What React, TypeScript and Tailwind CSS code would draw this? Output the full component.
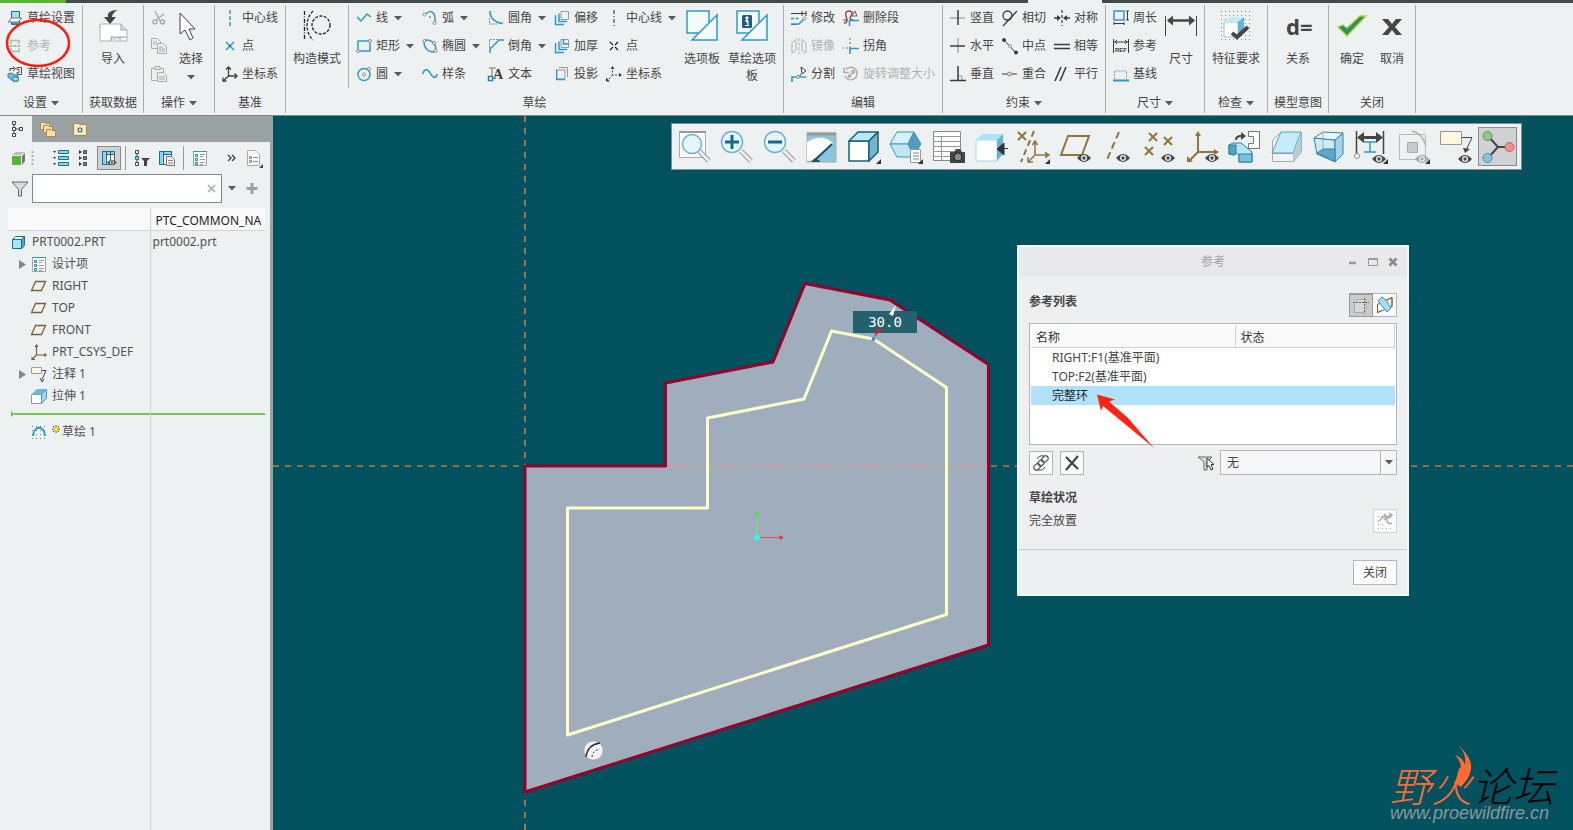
import { useState } from "react";
import type { ReactNode } from "react";

type IconProps = { children: ReactNode; size?: number };

const Icon = ({ children, size = 16 }: IconProps) => (
  <svg
    width={size}
    height={size}
    viewBox={`0 0 ${size} ${size}`}
    fill="none"
    className="shrink-0 overflow-visible"
    aria-hidden="true"
  >
    {children}
  </svg>
);

const Caret = () => (
  <svg width="8" height="5" viewBox="0 0 8 5" className="shrink-0" aria-hidden="true">
    <path d="M0 0h8L4 4.5z" fill="#5a5a5a" />
  </svg>
);

const Eye = ({ x = 16, y = 22, color = "#4b4b4b" }) => (
  <g transform={`translate(${x} ${y})`}>
    <path d="M0 5Q7-3 14 5Q7 13 0 5Z" fill={color} />
    <circle cx="7" cy="5" r="3" fill="#edf1f2" />
    <circle cx="7" cy="5" r="1.7" fill={color} />
  </g>
);

const Corner = () => <path d="M33 28v5h-5z" fill="#333" />;

const BLUE = "#2a9bcb";
const DARK = "#3c3c3c";
const GOLD = "#94743a";

/* ---------- ribbon icons, 16px ---------- */

const small: Record<string, ReactNode> = {
  setup: (
    <>
      <path d="M4.500 1.500h8v13h-8z" fill="#a6dcf2" stroke="#1b6d92" />
      <path d="M5 8h10l-4 4H1z" fill="#fff" stroke="#777" />
      <path d="M5 12.500h7v2H5z" fill={BLUE} />
    </>
  ),
  refs: (
    <g stroke="#b5b5b5">
      <path d="M4 6V2.500h8V6M4 10v3.500h8V10" strokeWidth="1.500" />
      <path d="M2.500 8h11" strokeWidth="2" strokeDasharray="3 1" />
    </g>
  ),
  view: (
    <>
      <path d="M3 5V2.500h4M6 .5l2.500 2L6 5" stroke={DARK} />
      <path d="M10 1.500h4.500v7H10v-2h2v-3h-2z" stroke="#555" />
      <path d="M1 8l3-1 4 2 3 1v5H6l-5-4z" fill="#6bbddd" stroke="#2380aa" />
      <path d="M6 11h5v4H6z" fill="#a6dcf2" stroke="#2380aa" />
    </>
  ),
  cut: (
    <g stroke="#aaa" strokeWidth="1.500">
      <path d="M4 1l5 10M13 4L5 10" />
      <circle cx="4" cy="12" r="2" />
      <circle cx="11.500" cy="12" r="2" />
    </g>
  ),
  copy: (
    <g stroke="#aaa" fill="#eceeef">
      <path d="M.5 .5h6l3 3v7h-9z" />
      <path d="M6.500 5.500h6l3 3v7h-9z" />
      <path d="M2 4h4M2 6h3M8 9h4M8 11h6M8 13h6" />
    </g>
  ),
  paste: (
    <g stroke="#aaa" fill="#eceeef">
      <path d="M.5 2.500h12v12H.5z" />
      <path d="M4 .5h5v3H4z" />
      <path d="M6.500 6.500h6l3 3v6h-9z" />
      <path d="M8 11h6M8 13h6" />
    </g>
  ),
  axisBlue: <path d="M8 0v16" stroke={BLUE} strokeWidth="1.500" strokeDasharray="4 2" />,
  pointBlue: (
    <>
      <path d="M4 4l8 8M12 4l-8 8" stroke={BLUE} strokeWidth="1.500" />
      <path d="M7 7h2v2H7z" fill="#1b6d92" />
    </>
  ),
  csys: (
    <g stroke={DARK} strokeWidth="1.300">
      <path d="M6.500 1v9H15M6.500 10L1 15" />
      <path d="M4 3.500L6.500 1 9 3.500M12.500 7.500L15 10l-2.500 2.500M1 11.500V15h3.500" />
    </g>
  ),
  line: <path d="M1 7l4 4 6-7 4 3" stroke={BLUE} strokeWidth="1.500" />,
  rect: (
    <>
      <path d="M2 3h12v10H2z" stroke={BLUE} strokeWidth="1.500" />
      <circle cx="14" cy="3" r="1.500" fill="#fff" stroke="#888" />
      <circle cx="2" cy="13" r="1.500" fill="#fff" stroke="#888" />
    </>
  ),
  circle: (
    <>
      <circle cx="8" cy="8.500" r="6" stroke={BLUE} strokeWidth="1.500" />
      <circle cx="8" cy="8.500" r="1.500" fill="#fff" stroke="#888" />
      <circle cx="13" cy="3" r="1.500" fill="#fff" stroke="#888" />
    </>
  ),
  arc: (
    <>
      <path d="M3 4.500Q9-1 12 4q2 4 .5 9" stroke={BLUE} strokeWidth="1.500" />
      <circle cx="2.500" cy="4.500" r="1.500" fill="#fff" stroke="#888" />
      <circle cx="8" cy="7" r="1" fill="#888" />
      <circle cx="12.500" cy="13" r="1.500" fill="#fff" stroke="#888" />
    </>
  ),
  ellipse: (
    <>
      <ellipse cx="8" cy="8" rx="7" ry="4.500" transform="rotate(45 8 8)" stroke={BLUE} strokeWidth="1.500" />
      <circle cx="2.500" cy="3" r="1.500" fill="#fff" stroke="#888" />
      <circle cx="12" cy="5" r="1.500" fill="#fff" stroke="#888" />
      <circle cx="13.500" cy="13" r="1.500" fill="#fff" stroke="#888" />
    </>
  ),
  spline: <path d="M1 8C2 2 6 3 8 7s6 7 7 1" stroke={BLUE} strokeWidth="1.600" />,
  fillet: (
    <>
      <path d="M2 1c0 7 5 12 13 12.500" stroke={BLUE} strokeWidth="1.600" />
      <path d="M1.500 8v6H10" stroke="#888" strokeDasharray="2 1" />
    </>
  ),
  chamfer: (
    <>
      <path d="M2 15v-4l9-9h5" stroke={BLUE} strokeWidth="1.500" />
      <path d="M1.500 10V1.500H10" stroke="#888" strokeDasharray="2 1" />
    </>
  ),
  text: (
    <>
      <path d="M1 2h7M4 2v12" stroke="#777" />
      <text x="5" y="13" fontSize="14" fontWeight="bold" fontFamily="Liberation Serif, serif" fill={DARK}>
        A
      </text>
      <path d="M.5 10.500h4v4h-4z" fill="#fff" stroke="#1b86b8" strokeWidth="1.500" />
    </>
  ),
  offset: (
    <>
      <path d="M7 1.500h7.500v8H7z" stroke="#999" />
      <path d="M5 3.500v8h8M1.500 5v9.500H10" stroke={BLUE} strokeWidth="1.500" />
    </>
  ),
  thicken: (
    <>
      <path d="M7 1.500h7.500v8H7z" stroke="#999" />
      <path d="M5 3.500v8h8M1.500 5v9.500H10M9.500 1v5H15" stroke={BLUE} strokeWidth="1.500" />
    </>
  ),
  project: (
    <>
      <path d="M3 4h8v9H3zM5 1.500h8.500V11" stroke="#999" />
      <path d="M2 13.500h9" stroke={BLUE} strokeWidth="1.500" />
      <path d="M2.500 3v10.500" stroke={BLUE} />
    </>
  ),
  axis: <path d="M8 0v16" stroke="#222" strokeDasharray="4 2 1 2" />,
  point: <path d="M4 4l3 3M9 9l3 3M12 4L9 7M7 9l-3 3" stroke="#222" strokeWidth="1.200" />,
  csysDash: (
    <>
      <path d="M6.500 1v8H14M6.500 9L1 15" stroke={DARK} strokeDasharray="2 1.500" />
      <path d="M4.500 3l2-3 2 3zM13 7l3 2-3 2zM0 11.500v4h4z" fill={DARK} />
    </>
  ),
  modify: (
    <>
      <path d="M0 3.500h15M11 1v5M15 1v5M0 14.500h6" stroke={DARK} />
      <path d="M0 8.500h9" stroke={BLUE} strokeWidth="1.500" strokeDasharray="3 1.500" />
      <path d="M0 14h8l5-5" stroke={BLUE} strokeWidth="1.600" />
      <circle cx="13.500" cy="8.500" r="1.500" fill="#fff" stroke="#888" />
    </>
  ),
  mirror: (
    <g stroke="#b2b2b2">
      <path d="M1 5l4-4v11l-4 3zM15 5l-4-4v11l4 3z" />
      <path d="M8 0v16" strokeDasharray="3 1.500" />
    </g>
  ),
  divide: (
    <>
      <path d="M1 16v-5h14" stroke={BLUE} strokeWidth="1.600" />
      <path d="M10 1l1 7 4-3zM10 8l-2 3" stroke={DARK} />
      <circle cx="7" cy="11" r="1.500" fill="#fff" stroke="#888" />
    </>
  ),
  remove: (
    <>
      <path d="M1 13c4 0 3-4 2-7s0-5 3-5 4 2 2 5 0 4 2 4" stroke="#a23a38" strokeWidth="1.400" />
      <path d="M12 1l-3 5h5zM0 10h5" stroke="#666" />
      <path d="M6.500 16v-5.500H16" stroke={BLUE} strokeWidth="1.600" />
    </>
  ),
  corner: (
    <>
      <path d="M7 0v10H0" stroke="#999" strokeWidth="1.500" strokeDasharray="2 2" />
      <path d="M7 16v-5.500h9" stroke={BLUE} strokeWidth="1.600" />
    </>
  ),
  rotate: (
    <g stroke="#aaa" strokeWidth="1.400">
      <path d="M3 3.500A6.300 6.300 0 1 1 2 10M1 1.500v5h5M5.500 11L11 5M8 5h3v3M5.500 8.500V11H8" />
    </g>
  ),
  vertical: (
    <>
      <path d="M0 8h15" stroke="#aaa" strokeWidth="1.500" />
      <path d="M8 0v15" stroke={DARK} strokeWidth="1.500" />
    </>
  ),
  horizontal: (
    <>
      <path d="M8 0v15" stroke="#aaa" strokeWidth="1.500" />
      <path d="M0 8h15" stroke={DARK} strokeWidth="1.500" />
    </>
  ),
  perp: (
    <>
      <path d="M8 10h4v4" stroke="#999" />
      <path d="M8 0v14M0 14.500h16" stroke={DARK} strokeWidth="1.500" />
    </>
  ),
  tangent: (
    <g stroke={DARK} strokeWidth="1.300">
      <circle cx="5.500" cy="5.500" r="4.500" />
      <path d="M1 16L15 1" />
    </g>
  ),
  middle: (
    <>
      <path d="M2 2l11 12" stroke={DARK} />
      <circle cx="2" cy="2" r="2" fill={DARK} />
      <circle cx="14" cy="14.500" r="2" fill={DARK} />
      <circle cx="8" cy="8" r="1.500" fill="#fff" stroke="#999" />
    </>
  ),
  coincident: (
    <>
      <path d="M0 8h15" stroke={DARK} />
      <circle cx="7.500" cy="8" r="2" fill="#ddd" stroke="#888" />
    </>
  ),
  symmetric: (
    <>
      <path d="M8 0v16" stroke={DARK} strokeDasharray="3 2" strokeWidth="1.200" />
      <path d="M0 8h4M16 8h-4" stroke={DARK} strokeWidth="1.300" />
      <path d="M3 5l4 3-4 3zM13 5L9 8l4 3z" fill={DARK} />
    </>
  ),
  equal: <path d="M0 6.500h16M0 10.500h16" stroke={DARK} strokeWidth="1.500" />,
  parallel: <path d="M1 15L7 1M6 15l6-14" stroke={DARK} strokeWidth="1.600" />,
  perimeter: (
    <>
      <path d="M1 1h10v9H1z" stroke={BLUE} strokeWidth="1.500" />
      <path d="M14.500 1v9M13 1h3M13 10h3M1 13.500h10M1 12v3M11 12v3" stroke={DARK} />
    </>
  ),
  refDim: (
    <>
      <path d="M.5 1v14M15.500 1v14M1 4h14M4 2L2 4l2 2M12 2l2 2-2 2" stroke={DARK} />
      <text x="2" y="14" fontSize="6" fontWeight="bold" fontFamily="Liberation Sans, sans-serif" fill={DARK}>
        REF
      </text>
    </>
  ),
  baseline: (
    <>
      <path d="M1.500 13V5h12v8" stroke="#999" strokeDasharray="2 1" />
      <path d="M0 14.500h16" stroke={BLUE} strokeWidth="2" />
    </>
  ),
};

/* ---------- ribbon icons, 32px ---------- */

const large: Record<string, ReactNode> = {
  import: (
    <>
      <path d="M3 14h21l6 6v11H3z" fill="#fff" stroke="#aab2b6" />
      <path d="M24 14v6h6M14 31v-4h16M23 27v4" fill="#cfe4ee" stroke="#8aa5b2" />
      <path d="M21 0c-8 0-11 3-10 7H7l6 7 6-7h-4c0-3 2-5 6-7z" fill="#454545" />
    </>
  ),
  select: <path d="M5 3v21l5-4 5 10 3-2-4-9h6z" fill="#fff" stroke="#444" />,
  construct: (
    <g stroke="#222" strokeWidth="1.300">
      <path d="M3.500 1v29" strokeDasharray="4 1.500 1 1.500" />
      <path d="M12 1C4 9 4 22 12 30" strokeDasharray="3 1.500" />
      <circle cx="20" cy="15" r="9" strokeDasharray="3 1.500" />
    </g>
  ),
  palette: (
    <g stroke={BLUE} strokeWidth="1.500">
      <path d="M1 1h22v22H1z" fill="#f5f9fa" />
      <path d="M31 5v25H6z" fill="#f5f9fa" />
    </g>
  ),
  paletteInfo: (
    <>
      <g stroke={BLUE} strokeWidth="1.500">
        <path d="M1 1h22v22H1z" fill="#f5f9fa" />
        <path d="M31 5v25H6z" fill="#f5f9fa" />
      </g>
      <rect x="6" y="5" width="10" height="13" rx="1.500" fill="#17607f" />
      <path d="M10 7h2v2h-2zM9 10.500h3v5h1M9 15.500h4" fill="#fff" stroke="#fff" />
    </>
  ),
  dimension: (
    <g stroke="#454545">
      <path d="M.5 6v20M31.500 6v20" />
      <path d="M3 10.500h26" strokeWidth="2.500" />
      <path d="M2 10.500l6-5v10zM30 10.500l-6-5v10z" fill="#454545" stroke="none" />
    </g>
  ),
  check: (
    <>
      <g stroke="#888" strokeDasharray="1 3">
        <path d="M1 1.500h30M1 5.500h30M1 9.500h30M1 13.500h30M1 17.500h30M1 21.500h30M1 25.500h30M1 29.500h30" />
      </g>
      <path d="M4 12h14v15H4z" fill="#fff" stroke="#9cc8da" />
      <path d="M4 12l6-5h14l-6 5z" fill="#c4ecf8" />
      <path d="M18 12l6-5v15l-6 5z" fill="#6ab3d0" />
      <path d="M12 23l5 4L28 17" stroke="#454545" strokeWidth="4" />
    </>
  ),
  relation: (
    <text x="4" y="25" fontSize="22" fontWeight="bold" fontFamily="Noto Sans, sans-serif" fill="#454545">
      d=
    </text>
  ),
  ok: <path d="M2 17l9 9L30 6h-6L11 18l-4-3z" fill="#2f9160" stroke="#b5d334" strokeWidth="1.300" />,
  cancel: <path d="M6 9h6l4 5 4-5h6l-7 8 7 8h-6l-4-5-4 5H6l7-8z" fill="#454545" />,
};

type ToolProps = { icon: string; label: string; caret?: boolean; disabled?: boolean };

const Tool = ({ icon, label, caret, disabled }: ToolProps) => (
  <button
    type="button"
    disabled={disabled}
    className="flex h-7 items-center gap-1 whitespace-nowrap text-[#454545] disabled:text-[#b0b3b4]"
  >
    <Icon>{small[icon]}</Icon>
    <span>{label}</span>
    {caret && (
      <span className="pl-0.5">
        <Caret />
      </span>
    )}
  </button>
);

type BigToolProps = { icon: string; label: string; caret?: boolean; width?: string };

const BigTool = ({ icon, label, caret, width = "w-12" }: BigToolProps) => (
  <button type="button" className={`flex shrink-0 flex-col items-center pt-1.5 leading-[17px] ${width}`}>
    <Icon size={32}>{large[icon]}</Icon>
    <span className="pt-2">{label}</span>
    {caret && (
      <span className="pt-2">
        <Caret />
      </span>
    )}
  </button>
);

type GroupProps = { label: string; caret?: boolean; width: string; children: ReactNode };

const Group = ({ label, caret, width, children }: GroupProps) => (
  <section className={`flex h-28 shrink-0 ${width}`}>
    <div className="flex min-w-0 flex-1 flex-col pt-px">
      <div className="flex flex-1 items-start">{children}</div>
      <button type="button" className="flex h-6 items-center justify-center gap-1 whitespace-nowrap">
        {label}
        {caret && <Caret />}
      </button>
    </div>
    <div className="my-0.5 w-px bg-[#a9adaf]" />
  </section>
);

const Column = ({ tools, width = "" }: { tools: ToolProps[]; width?: string }) => (
  <div className={`flex shrink-0 flex-col items-start ${width}`}>
    {tools.map((tool) => (
      <Tool key={tool.icon} {...tool} />
    ))}
  </div>
);

const Ribbon = () => (
  <header className="shrink-0 border-b border-[#7f898c] bg-[#edf1f2]">
    <div className="flex h-[3px] bg-[#414b49]">
      <div className="w-[66px] bg-[#5cb531]" />
      <div className="w-[962px]" />
      <div className="w-[74px] bg-[#edf1f2]" />
    </div>
    <div className="flex">
      <Group label="设置" caret width="w-[83px]">
        <div className="pl-[7px]">
          <Column
            tools={[
              { icon: "setup", label: "草绘设置" },
              { icon: "refs", label: "参考", disabled: true },
              { icon: "view", label: "草绘视图" },
            ]}
          />
        </div>
      </Group>
      <Group label="获取数据" width="w-[61px]">
        <div className="flex flex-1 justify-center">
          <BigTool icon="import" label="导入" />
        </div>
      </Group>
      <Group label="操作" caret width="w-[71px]">
        <div className="flex pl-[7px]">
          <div className="w-4">
            {["cut", "copy", "paste"].map((name) => (
              <button key={name} type="button" aria-label={name} className="flex h-7 items-center">
                <Icon>{small[name]}</Icon>
              </button>
            ))}
          </div>
          <BigTool icon="select" label="选择" caret />
        </div>
      </Group>
      <Group label="基准" width="w-[71px]">
        <div className="pl-[7px]">
          <Column
            tools={[
              { icon: "axisBlue", label: "中心线" },
              { icon: "pointBlue", label: "点" },
              { icon: "csys", label: "坐标系" },
            ]}
          />
        </div>
      </Group>
      <Group label="草绘" width="w-[498px]">
        <div className="flex px-[7px]">
          <BigTool icon="construct" label="构造模式" />
        </div>
        <div className="mr-[7px] mt-px h-[83px] w-px bg-[#a9adaf]" />
        <Column
          width="w-[66px]"
          tools={[
            { icon: "line", label: "线", caret: true },
            { icon: "rect", label: "矩形", caret: true },
            { icon: "circle", label: "圆", caret: true },
          ]}
        />
        <Column
          width="w-[66px]"
          tools={[
            { icon: "arc", label: "弧", caret: true },
            { icon: "ellipse", label: "椭圆", caret: true },
            { icon: "spline", label: "样条" },
          ]}
        />
        <Column
          width="w-[66px]"
          tools={[
            { icon: "fillet", label: "圆角", caret: true },
            { icon: "chamfer", label: "倒角", caret: true },
            { icon: "text", label: "文本" },
          ]}
        />
        <Column
          width="w-[52px]"
          tools={[
            { icon: "offset", label: "偏移" },
            { icon: "thicken", label: "加厚" },
            { icon: "project", label: "投影" },
          ]}
        />
        <Column
          width="w-[72px]"
          tools={[
            { icon: "axis", label: "中心线", caret: true },
            { icon: "point", label: "点" },
            { icon: "csysDash", label: "坐标系" },
          ]}
        />
        <BigTool icon="palette" label="选项板" />
        <BigTool icon="paletteInfo" label="草绘选项板" width="w-[52px]" />
      </Group>
      <Group label="编辑" width="w-[159px]">
        <div className="flex pl-[7px]">
          <Column
            width="w-[52px]"
            tools={[
              { icon: "modify", label: "修改" },
              { icon: "mirror", label: "镜像", disabled: true },
              { icon: "divide", label: "分割" },
            ]}
          />
          <Column
            tools={[
              { icon: "remove", label: "删除段" },
              { icon: "corner", label: "拐角" },
              { icon: "rotate", label: "旋转调整大小", disabled: true },
            ]}
          />
        </div>
      </Group>
      <Group label="约束" caret width="w-[163px]">
        <div className="flex pl-[7px]">
          <Column
            width="w-[52px]"
            tools={[
              { icon: "vertical", label: "竖直" },
              { icon: "horizontal", label: "水平" },
              { icon: "perp", label: "垂直" },
            ]}
          />
          <Column
            width="w-[52px]"
            tools={[
              { icon: "tangent", label: "相切" },
              { icon: "middle", label: "中点" },
              { icon: "coincident", label: "重合" },
            ]}
          />
          <Column
            tools={[
              { icon: "symmetric", label: "对称" },
              { icon: "equal", label: "相等" },
              { icon: "parallel", label: "平行" },
            ]}
          />
        </div>
      </Group>
      <Group label="尺寸" caret width="w-[99px]">
        <div className="flex pl-[7px]">
          <Column
            tools={[
              { icon: "perimeter", label: "周长" },
              { icon: "refDim", label: "参考" },
              { icon: "baseline", label: "基线" },
            ]}
          />
          <BigTool icon="dimension" label="尺寸" />
        </div>
      </Group>
      <Group label="检查" caret width="w-[63px]">
        <div className="flex flex-1 justify-center">
          <BigTool icon="check" label="特征要求" />
        </div>
      </Group>
      <Group label="模型意图" width="w-[61px]">
        <div className="flex flex-1 justify-center">
          <BigTool icon="relation" label="关系" />
        </div>
      </Group>
      <Group label="关闭" width="w-[87px]">
        <div className="flex flex-1 justify-center">
          <BigTool icon="ok" label="确定" width="w-10" />
          <BigTool icon="cancel" label="取消" width="w-10" />
        </div>
      </Group>
    </div>
  </header>
);

/* ---------- model tree ---------- */

const DocList = () => (
  <>
    <path d="M1.500 1.500h13v14h-13z" fill="#fff" stroke="#a0a4a6" />
    <path d="M1 1.500h14" stroke={BLUE} />
    <path d="M3.500 4.500h2v2h-2zM3.500 8.500h2v2h-2zM3.500 12.500h2v2h-2z" stroke="#1b86b8" />
    <path d="M8 4.500h5M8 6.500h3M8 9.500h5M8 12.500h5M8 14.500h3" stroke="#999" />
  </>
);

const Plane = () => <path d="M4.500 3.500h10l-4 9H.5z" stroke="#7c6132" strokeWidth="1.300" />;

type TreeRow = {
  label: string;
  icon: ReactNode;
  root?: boolean;
  expandable?: boolean;
  fresh?: boolean;
  value?: string;
};

const rows: TreeRow[] = [
  {
    label: "PRT0002.PRT",
    root: true,
    value: "prt0002.prt",
    icon: (
      <g stroke="#1b6d92">
        <path d="M1.500 5.500h9v9h-9z" fill="#a5e2fb" />
        <path d="M1.500 5.500l3-3h9l-3 3z" fill="#dff5fd" />
        <path d="M10.500 5.500l3-3v9l-3 3z" fill="#4ba9cf" />
      </g>
    ),
  },
  { label: "设计项", expandable: true, icon: <DocList /> },
  { label: "RIGHT", icon: <Plane /> },
  { label: "TOP", icon: <Plane /> },
  { label: "FRONT", icon: <Plane /> },
  {
    label: "PRT_CSYS_DEF",
    icon: (
      <path
        d="M5.500 1v10H15M5.500 11L1 15.500M4 3l1.500-2L7 3M13.500 9.500L15 11l-1.500 1.500M1 13v2.500h3"
        stroke="#7c6132"
        strokeWidth="1.200"
      />
    ),
  },
  {
    label: "注释 1",
    expandable: true,
    icon: (
      <>
        <path d="M.5 1.500h10v6H.5z" fill="#fff6df" stroke="#a0a0a0" />
        <path d="M11 4.500h4l-4 9M9 12l2 4 2-3" stroke="#444" />
      </>
    ),
  },
  {
    label: "拉伸 1",
    icon: (
      <>
        <path d="M.5 6.500h10v9H.5z" fill="#fff" stroke="#999" />
        <path d="M.5 6.500L6 1h9.500L10.500 6.500z" fill="#6bb9d8" />
        <path d="M10.500 6.500L15.500 1v9.500l-5 5z" fill="#9dd5eb" stroke="#5a9ab5" />
      </>
    ),
  },
];

const sketchIcon = (
  <>
    <g stroke="#777" strokeDasharray="1 3">
      <path d="M1 2.500h14M1 6.500h14M1 10.500h14M1 14.500h14" />
    </g>
    <path d="M2 12c1-11 11-11 12 0" stroke={BLUE} strokeWidth="2" />
  </>
);

const TreeItem = ({ label, icon, root, expandable, fresh, value }: TreeRow) => (
  <tr className="h-[22px]">
    <td className="border-r border-[#cfd3d4] p-0">
      <div className="flex h-[22px] items-center gap-[5px] pl-[3px]">
        {!root && (
          <span className="flex w-[15px] justify-end">
            {expandable && (
              <svg width="7" height="9" viewBox="0 0 7 9" aria-hidden="true">
                <path d="M0 0l7 4.500L0 9z" fill="#868686" />
              </svg>
            )}
          </span>
        )}
        <Icon>{icon}</Icon>
        <span className="flex items-center gap-0.5 whitespace-nowrap">
          {fresh && (
            <svg width="8" height="16" viewBox="0 0 8 16" aria-hidden="true">
              <path d="M4 1v8M0 5h8M1 2l6 6M7 2L1 8" stroke="#444" />
              <circle cx="4" cy="5" r="2.200" fill="#ffec00" />
            </svg>
          )}
          {label}
        </span>
      </div>
    </td>
    <td className="p-0 pl-0.5">{value}</td>
  </tr>
);

const Sidebar = () => {
  const [filter, setFilter] = useState<string>("");

  return (
    <aside className="flex w-[273px] shrink-0 flex-col border-r-[3px] border-[#9aa1a3] bg-[#edf1f2] text-[#505050]">
      <div className="flex h-[26px] shrink-0 bg-[#9aa1a3]">
        <button type="button" aria-label="模型树" className="flex w-8 items-center justify-center bg-[#edf1f2]">
          <Icon>
            <path
              d="M4.500.5h3v3h-3zM4.500 6.500h3v3h-3zM4.500 12.500h3v3h-3zM11.500 6.500h3v3h-3zM6 4v2M6 10v2M8 8h3"
              stroke="#444"
            />
          </Icon>
        </button>
        <button type="button" aria-label="文件夹浏览器" className="flex w-8 items-center justify-center">
          <Icon>
            <g fill="#fbe0a4" stroke="#a88a52">
              <path d="M.5 1.500h4l1 1h4v6h-9z" />
              <path d="M3.500 4.500h4l1 1h4v6h-9z" />
              <path d="M6.500 8.500h4l1 1h4v6h-9z" />
            </g>
          </Icon>
        </button>
        <button type="button" aria-label="收藏夹" className="flex w-8 items-center justify-center">
          <Icon>
            <path d="M1.500 2.500h5l1 1h7v11h-13z" fill="#fbe8bb" stroke="#a88a52" />
            <path d="M8 6v6M5 9h6M6 7l4 4M10 7l-4 4" stroke="#1b5d80" />
            <circle cx="8" cy="9" r="1" fill="#fff" />
          </Icon>
        </button>
      </div>

      <div className="flex h-8 shrink-0 items-center gap-1 pl-[11px] pr-2">
        <div className="flex w-[38px] items-center gap-1">
          <Icon>
            <path d="M1 6h9v9H1z" fill="#56b530" />
            <path d="M1 5l4-3h9l-4 3z" fill="#b9bcbd" />
            <path d="M11 6l3-3v8l-3 4z" fill="#777" />
          </Icon>
          <svg width="3" height="16" viewBox="0 0 3 16" aria-hidden="true">
            <path d="M1.500 1v15" stroke="#aaa" strokeWidth="2" strokeDasharray="2 2" />
          </svg>
        </div>
        <div className="flex items-center gap-1.5">
          <Icon>
            <path d="M5.500 .5h10v3h-10zM5.500 6.500h10v3h-10zM5.500 12.500h10v3h-10z" fill="#8ad4f4" stroke="#1b6d92" />
            <path d="M0 1h3L1.500 3zM0 7h3L1.500 9zM0 13h3l-1.500 2z" fill="#333" />
          </Icon>
          <Icon>
            <path d="M8.500 .5h3v3h-3zM8.500 6.500h3v3h-3zM8.500 12.500h3v3h-3z" fill="#888" stroke="#444" />
            <path d="M4 0l3 2-3 2zM4 6l3 2-3 2zM4 12l3 2-3 2z" fill="#333" />
          </Icon>
          <button
            type="button"
            aria-label="树列"
            className="flex size-6 items-center justify-center border border-[#8a8d8f] bg-[#cfd1d3]"
          >
            <Icon>
              <path d="M1.500 1.500h12v13h-12z" fill="#fff" stroke="#555" />
              <path d="M1.500 1.500h4v13h-4zM5.500 1.500h8v3h-8z" fill="#8ad4f4" stroke="#1b6d92" />
              <path d="M9.500 2v9" stroke="#555" />
              <g transform="translate(6 9) scale(.7)">
                <Eye x={0} y={0} />
              </g>
            </Icon>
          </button>
        </div>
        <div className="h-6 w-px bg-[#9a9d9f]" />
        <div className="flex items-center gap-[9px] px-1">
          <Icon>
            <path d="M1.500.5h3v3h-3zM1.500 12.500h3v3h-3zM3 4v2M3 10v2" stroke="#444" />
            <path d="M1.500 6.500h3v3h-3z" fill="#8ad4f4" stroke="#1b6d92" />
            <path d="M7 8h9l-3 3v5h-3v-5z" fill="#444" />
          </Icon>
          <Icon>
            <path d="M.5 1.500h12v13H.5z" fill="#fff" stroke="#555" />
            <path d="M.5 1.500h4v13h-4zM4.500 1.500h8v3h-8z" fill="#8ad4f4" stroke="#1b6d92" />
            <path d="M7.500 6.500h5l3 3v6h-8z" fill="#f2f2f2" stroke="#777" />
            <path d="M9 10.500h5M9 13h5" stroke="#888" />
          </Icon>
        </div>
        <div className="h-6 w-px bg-[#9a9d9f]" />
        <div className="px-1">
          <Icon>
            <DocList />
          </Icon>
        </div>
        <div className="flex flex-1 items-center justify-end gap-1.5">
          <Icon>
            <path d="M4 5l3 3-3 3M8 5l3 3-3 3" stroke="#444" strokeWidth="1.400" />
          </Icon>
          <Icon>
            <path d="M1.500.5h8l4 4v11h-12z" fill="#fafafa" stroke="#aaa" />
            <path d="M3.500 6.500h2v2h-2zM3.500 10.500h2v2h-2zM7 7.500h5M7 11.500h5" stroke="#888" />
            <path d="M17 14v4h-4z" fill="#444" />
          </Icon>
        </div>
      </div>

      <div className="flex h-[29px] shrink-0 items-center gap-1 pl-3 pr-1">
        <Icon>
          <path d="M0 1h16L9.500 8.500V15h-3V8.500z" fill="#d9dcdd" stroke="#666" />
        </Icon>
        <div className="flex h-full w-[190px] shrink-0 items-center border border-[#7f898c] bg-white pr-0.5">
          <input
            type="text"
            aria-label="树过滤器"
            value={filter}
            onChange={(e) => setFilter(e.target.value)}
            className="h-full min-w-0 flex-1 px-1 focus:outline-hidden"
          />
          <button type="button" aria-label="清除" onClick={() => setFilter("")}>
            <Icon>
              <path d="M5 4l7 7M12 4l-7 7" stroke="#aaa" strokeWidth="1.500" />
            </Icon>
          </button>
        </div>
        <button type="button" aria-label="过滤选项" className="px-0.5">
          <Caret />
        </button>
        <button type="button" aria-label="添加" className="px-0.5">
          <Icon>
            <path d="M8 2v11M2.500 7.500h11" stroke="#a0a0a0" strokeWidth="3" />
          </Icon>
        </button>
      </div>

      <div className="min-h-0 flex-1 pl-2 pr-[5px] pt-[5px]">
        <table className="h-full w-full table-fixed border-collapse">
          <thead>
            <tr className="h-[22px] bg-[#fafafa]">
              <th className="w-[142px] border-b border-r border-[#cfd3d4] p-0" aria-label="名称" />
              <th className="overflow-hidden whitespace-nowrap border-b border-[#cfd3d4] p-0 pl-[5px] pt-1 text-left font-normal text-[#222]">
                PTC_COMMON_NA
              </th>
            </tr>
          </thead>
          <tbody>
            {rows.map((row) => (
              <TreeItem key={row.label} {...row} />
            ))}
            <tr className="h-3.5">
              <td className="border-r border-[#cfd3d4] p-0 pl-[3px]">
                <div className="flex h-3.5 items-center">
                  <svg width="3" height="6" viewBox="0 0 3 6" aria-hidden="true">
                    <path d="M0 0l3 3-3 3z" fill="#5cc03a" />
                  </svg>
                  <div className="h-0.5 flex-1 bg-[#6cc94c]" />
                </div>
              </td>
              <td className="p-0">
                <div className="h-0.5 bg-[#6cc94c]" />
              </td>
            </tr>
            <TreeItem label="草绘 1" icon={sketchIcon} fresh />
            <tr>
              <td className="border-r border-[#cfd3d4]" />
              <td />
            </tr>
          </tbody>
        </table>
      </div>
    </aside>
  );
};

/* ---------- graphics toolbar ---------- */

const Lens = ({ x, y, r }: { x: number; y: number; r: number }) => (
  <>
    <path d="M20 20l10 10" stroke="#999" strokeWidth="5" />
    <path d="M20 20l10 10" stroke="#eee" strokeWidth="3" />
    <circle cx={x} cy={y} r={r} fill="#e4f6fc" stroke="#6fb2cd" strokeWidth="1.500" />
  </>
);

const viewTools: { name: string; icon: ReactNode; active?: boolean }[] = [
  {
    name: "重新调整",
    icon: (
      <>
        <path d="M.5.5h26v26H.5z" fill="#fbfbfb" stroke="#aaa" />
        <path d="M0 1h27" stroke="#999" strokeWidth="2" />
        <Lens x={13} y={13} r={9.5} />
      </>
    ),
  },
  {
    name: "放大",
    icon: (
      <>
        <Lens x={11} y={11} r={10.5} />
        <path d="M11 4v14M4 11h14" stroke="#16688c" strokeWidth="3" />
      </>
    ),
  },
  {
    name: "缩小",
    icon: (
      <>
        <Lens x={11} y={11} r={10.5} />
        <path d="M4 11h14" stroke="#16688c" strokeWidth="3" />
      </>
    ),
  },
  {
    name: "重画",
    icon: (
      <>
        <path d="M1 2h29v29H1z" fill="#8cc6dd" stroke="#aaa" />
        <path d="M1 5v25l6-1L27 12Q16 2 1 11z" fill="#fff" />
        <path d="M1 3h29" stroke="#999" strokeWidth="3" />
        <path d="M26 13L10 28" stroke="#16506a" strokeWidth="2" />
        <path d="M5 31l4-4 5 3v1z" fill="#16506a" />
      </>
    ),
  },
  {
    name: "显示样式",
    icon: (
      <>
        <g stroke="#17607f" strokeWidth="1.500" strokeLinejoin="round">
          <path d="M1 10h20v20H1z" fill="#fff" />
          <path d="M1 10l9-9h20l-9 9z" fill="#b5e8fa" />
          <path d="M21 10l9-9v20l-9 9z" fill="#76b4cf" />
        </g>
        <Corner />
      </>
    ),
  },
  {
    name: "已保存方向",
    icon: (
      <>
        <g stroke="#3f94b8" strokeLinejoin="round">
          <path d="M7 1h17L18 13H0z" fill="#d5f2fb" />
          <path d="M0 13h18l6 13H7z" fill="#bfe7f6" />
          <path d="M24 1l7 12-6 10-7-10z" fill="#4f9cbd" />
        </g>
        <path d="M20.500 18.500h10v13h-10z" fill="#fafafa" stroke="#999" />
        <path d="M23 22h6M23 25h6M23 28h6" stroke="#888" />
        <Corner />
      </>
    ),
  },
  {
    name: "视图管理器",
    icon: (
      <>
        <path d="M.5.5h27v29H.5z" fill="#fff" stroke="#888" />
        <path d="M0 5.500h27M0 10.500h27M0 15.500h27M0 20.500h27M0 25.500h27M8.500 5v25" stroke="#999" />
        <path d="M17 21h4l2-3h4l2 3h3v11H17z" fill="#454545" />
        <circle cx="25" cy="26" r="4" fill="#888" stroke="#222" />
      </>
    ),
  },
  {
    name: "视图法向",
    icon: (
      <>
        <path d="M1 9h21v21H1z" fill="#fff" stroke="#a9d8ea" />
        <path d="M1 9l6-6h21l-6 6z" fill="#a9e6fb" />
        <path d="M22 9l6-6v20l-6 7z" fill="#69b4d3" />
        <path d="M22 18l7-6v12zM28 17.500h5" fill="#333" stroke="#333" />
      </>
    ),
  },
  {
    name: "基准显示过滤器",
    icon: (
      <>
        <path d="M1 1l8 8M9 1L1 9" stroke={GOLD} strokeWidth="2" />
        <path d="M17 0L4 31" stroke={GOLD} strokeWidth="2" strokeDasharray="6 4" />
        <path
          d="M18 11v13h13M18 24l-6 6M15.500 14l2.500-4 2.500 4M28 21.500l4 2.500-4 2.500M11 26v5h5"
          stroke={GOLD}
          strokeWidth="1.500"
        />
        <Corner />
      </>
    ),
  },
  {
    name: "平面显示",
    icon: (
      <>
        <path d="M9 5h21l-7 19H2z" stroke={GOLD} strokeWidth="2" />
        <Eye x={18} />
      </>
    ),
  },
  {
    name: "轴显示",
    icon: (
      <>
        <path d="M17 1L4 31" stroke={GOLD} strokeWidth="2" strokeDasharray="7 4" />
        <Eye x={14} />
      </>
    ),
  },
  {
    name: "点显示",
    icon: (
      <>
        <path d="M5 2l8 8M13 2l-8 8M20 6l8 8M28 6l-8 8M1 16l8 8M9 16l-8 8" stroke={GOLD} strokeWidth="2" />
        <Eye x={17} />
      </>
    ),
  },
  {
    name: "坐标系显示",
    icon: (
      <>
        <path d="M12 3v18h18M12 21l-9 9" stroke={GOLD} strokeWidth="2" />
        <path d="M9 5l3-5 3 5zM28 18l5 3-5 3zM1 25v6h6z" fill={GOLD} />
        <Eye x={19} />
      </>
    ),
  },
  {
    name: "草绘视图",
    icon: (
      <>
        <path d="M8 9q0-4 5-4" stroke="#444" strokeWidth="2" />
        <path d="M13 1l5 4-5 4z" fill="#444" />
        <path d="M20.500.5h11v17h-11v-5h5v-7h-5z" fill="#fff" stroke="#777" />
        <g stroke="#2a7fa3" strokeLinejoin="round">
          <path d="M1 14l4-2h8l11 9v10H11V24l-5-4v4l-5-1z" fill="#b8e4f4" />
          <path d="M1 14h7v9l-2 1-5-1z" fill="#4fa4c8" />
          <path d="M11 23h13v8H11z" fill="#7cc0db" />
        </g>
      </>
    ),
  },
  {
    name: "修剪模型",
    icon: (
      <>
        <path d="M1.500 22.500h21v8h-21z" fill="#f3f3f3" stroke="#aaa" />
        <path d="M1.500 22V9L10 1M22.500 30.500l8-9V1" stroke="#aaa" />
        <path d="M10 1h20l-8 21H1z" fill="#c6ecf7" stroke="#4fa4c4" />
        <path d="M22.500 22L30 2v19l-7.500 9z" fill="#b7cdd7" />
      </>
    ),
  },
  {
    name: "透视图",
    icon: (
      <g stroke="#3684a6" strokeLinejoin="round">
        <path d="M1 7l21 2v22L4 23z" fill="#cdeaf5" />
        <path d="M1 7l9-6 20 1-8 7z" fill="#e6f6fb" />
        <path d="M22 9l8-7v21l-8 8z" fill="#a4d5e8" />
        <path d="M4 22l6-4h12v12z" fill="#5fa9c7" />
        <path d="M10 1v17" stroke="#7fb9d1" />
      </g>
    ),
  },
  {
    name: "尺寸显示",
    icon: (
      <>
        <path d="M1.500 0v23M28.500 0v23" stroke="#454545" strokeWidth="1.500" />
        <path d="M5 6.500h20" stroke="#454545" strokeWidth="3" />
        <path d="M2 6.500L9 1v11zM28 6.500L21 1v11z" fill="#454545" />
        <path d="M9 11h12M15 11v10M9 21h12" stroke={BLUE} strokeWidth="1.500" />
        <circle cx="2" cy="25" r="2.500" fill="#fff" stroke="#888" />
        <Eye x={17} y={23} />
        <Corner />
      </>
    ),
  },
  {
    name: "约束显示",
    icon: (
      <>
        <path d="M2.500 3.500h26v25h-26z" stroke="#bbb" />
        <path d="M10.500 11.500h10v10h-10z" fill="#c9cacb" stroke="#aaa" />
        <path d="M15 0c8 2 12 7 14 15" stroke="#bbb" strokeWidth="2" />
        <Eye x={18} y={23} color="#a5a5a5" />
        <Corner />
      </>
    ),
  },
  {
    name: "注释显示",
    icon: (
      <>
        <path d="M.5.500h21v13H.500z" fill="#fff6df" stroke="#999" />
        <path d="M22 6.500h10l-6 13" stroke="#444" />
        <path d="M23 17l7 1-5 4z" fill="#444" />
        <Eye x={18} y={23} />
      </>
    ),
  },
  {
    name: "旋转中心",
    active: true,
    icon: (
      <>
        <path d="M6 5l10 11L6 27M16 16h12" stroke="#454545" strokeWidth="2" />
        <circle cx="5.500" cy="5" r="4.500" fill="#8fc98a" stroke="#5a9a56" />
        <circle cx="5.500" cy="27" r="4.500" fill="#8ac3df" stroke="#4c8fae" />
        <circle cx="27.500" cy="16" r="4.500" fill="#f3908a" stroke="#c4605a" />
      </>
    ),
  },
];

const ViewToolbar = () => (
  <div className="absolute left-[398px] top-[7px] flex h-[47px] w-[851px] items-center border border-[#8a8d8f] bg-[#edf1f2] px-0.5">
    {viewTools.map((tool) => (
      <button
        key={tool.name}
        type="button"
        aria-label={tool.name}
        className="flex flex-1 items-center justify-center"
      >
        <span
          className={
            tool.active
              ? "flex size-[39px] items-center justify-center border border-[#8a8d8f] bg-[#cfd1d3]"
              : "flex size-[39px] items-center justify-center"
          }
        >
          <Icon size={32}>{tool.icon}</Icon>
        </span>
      </button>
    ))}
  </div>
);

/* ---------- sketch, drawn in window coordinates ---------- */

const Sketch = () => (
  <svg className="absolute inset-0 h-full w-full" aria-hidden="true">
    <g transform="translate(-273 -116)" fill="none">
      <path d="M525 116V830" stroke="#c9824d" strokeWidth="1.500" strokeDasharray="6 6" />
      <path
        d="M525 466H665.500V383L773 362L805 283.500L890 300L988.500 364.500V645L525 792Z"
        fill="#a0adbd"
        stroke="#96002a"
        strokeWidth="3"
        strokeLinejoin="round"
      />
      <path d="M273 466H525M991 466H1573" stroke="#c9743a" strokeWidth="1.500" strokeDasharray="6 6" />
      <path d="M669 466H986" stroke="#e39a80" strokeWidth="1.500" strokeDasharray="6 6" />
      <path
        d="M567.500 508H707.500V418L804 399L831.500 331L873.500 339L946.500 387.500V614.500L567.500 735Z"
        stroke="#ffffc8"
        strokeWidth="3"
        strokeLinejoin="round"
      />
      <path d="M757 537V514" stroke="#6fdd8a" strokeWidth="1.500" />
      <path d="M757 537.500H781" stroke="#f04a4a" />
      <circle cx="757" cy="514" r="2" fill="#3ee83e" />
      <circle cx="781" cy="537.500" r="2" fill="#f23535" />
      <circle cx="757" cy="537.500" r="3" fill="#30f6f6" />
      <path d="M853 311h64v22h-64z" fill="#23616e" />
      <text x="885" y="327" textAnchor="middle" fontSize="14" fontFamily="DejaVu Sans Mono, monospace" fill="#fff">
        30.0
      </text>
      <path d="M896 305l-7 9 4 2z" fill="#fff" />
      <path d="M874 337l4-9 4 2z" fill="#f0122c" />
      <circle cx="873.500" cy="339" r="2" fill="#3a8ee8" />
      <circle cx="593.500" cy="750.500" r="9.500" fill="#f5f5f5" stroke="#999" strokeWidth=".5" />
      <path d="M586 757c1-8 6-13 14-14" stroke="#333" strokeWidth="1.500" />
      <path d="M592 757c0-4 3-7 8-8" stroke="#333" strokeDasharray="2 2" />
    </g>
  </svg>
);

/* ---------- references dialog ---------- */

const references = ["RIGHT:F1(基准平面)", "TOP:F2(基准平面)", "完整环"];

const Dialog = () => {
  const [selected, setSelected] = useState<string>("完整环");

  return (
    <div
      role="dialog"
      aria-label="参考"
      className="absolute left-[744px] top-[129px] flex h-[351px] w-[392px] flex-col border-2 border-[#f5f6f6] bg-[#eeeff1] text-[#454545]"
    >
      <div className="flex h-[30px] shrink-0 items-center bg-[#e7e9eb] text-[#a0a0a0]">
        <span className="w-[74px]" />
        <h2 className="flex-1 text-center">参考</h2>
        <div className="flex w-[74px] items-center gap-1 pl-3">
          <button type="button" aria-label="最小化">
            <Icon>
              <path d="M4 9h7" stroke="#999" strokeWidth="2.500" />
            </Icon>
          </button>
          <button type="button" aria-label="最大化">
            <Icon>
              <path d="M3.500 4.500h9v7h-9zM3 5.500h10" stroke="#999" />
            </Icon>
          </button>
          <button type="button" aria-label="关闭窗口">
            <Icon>
              <path d="M4.500 4.500l7 7M11.500 4.500l-7 7" stroke="#8a8a8a" strokeWidth="2.500" />
            </Icon>
          </button>
        </div>
      </div>

      <div className="flex flex-col px-2.5 pt-4">
        <div className="flex items-start justify-between">
          <h3 className="leading-[18px] font-bold">参考列表</h3>
          <div className="flex">
            <button
              type="button"
              aria-label="剖面"
              className="flex size-6 items-center justify-center border border-t-2 border-[#9a9d9f] bg-[#c9cbcd]"
            >
              <Icon>
                <path d="M1.500 4.500l4-3h8v9l-3 4h-9z" fill="#d5dadd" stroke="#aaa" />
                <path d="M0 4.500h16M11.500 0v16" stroke="#7c6132" strokeDasharray="2 1" />
              </Icon>
            </button>
            <button
              type="button"
              aria-label="相交"
              className="flex size-6 items-center justify-center border border-l-0 border-[#b3b6b8] bg-[#fafafa]"
            >
              <Icon>
                <path d="M.5 7.500L15 .5v9L.500 15.500z" stroke="#7c6132" />
                <path d="M1 4l4-4 4 3 5 8-4 4-5-6z" fill="#a9dcf0" stroke="#3f8fb3" />
                <path d="M.5 7.500V15.500l4-2M15 9.500v-9L9 3.500" stroke="#7c6132" />
              </Icon>
            </button>
          </div>
        </div>

        <div className="mt-1.5 h-[122px] border border-[#b3b6b8] bg-white p-px">
          <table className="w-full table-fixed border-collapse">
            <thead>
              <tr className="h-[22px] bg-[#fafafa] text-left leading-[17px] text-[#333]">
                <th className="w-[204px] border-b border-r border-[#cfd1d3] p-0 pl-[5px] pt-1 font-normal">名称</th>
                <th className="border-b border-r border-[#cfd1d3] p-0 pl-[5px] pt-1 font-normal">状态</th>
              </tr>
            </thead>
            <tbody>
              {references.map((name) => (
                <tr
                  key={name}
                  onClick={() => setSelected(name)}
                  className={selected === name ? "h-[19px] bg-[#b0e2ff] text-[#222]" : "h-[19px]"}
                >
                  <td colSpan={2} className="p-0 pl-[21px] leading-[19px]">
                    {name}
                  </td>
                </tr>
              ))}
            </tbody>
          </table>
        </div>

        <div className="mt-[5px] flex h-[25px] items-center justify-between">
          <div className="flex gap-[7px]">
            <button
              type="button"
              aria-label="替换"
              className="flex size-6 items-center justify-center border border-[#b3b6b8] bg-[#fafafa]"
            >
              <Icon>
                <g stroke="#555" strokeWidth="1.200" transform="rotate(-45 8 8)">
                  <rect x="-1" y="5.500" width="7" height="5" rx="2" />
                  <rect x="5" y="5.500" width="6" height="5" rx="2" />
                  <rect x="10" y="5.500" width="7" height="5" rx="2" />
                </g>
                <path d="M4 4q2-4 7-3M12 12q-2 4-7 3" stroke="#444" />
              </Icon>
            </button>
            <button
              type="button"
              aria-label="删除"
              className="flex size-6 items-center justify-center border border-[#b3b6b8] bg-[#fafafa]"
            >
              <Icon>
                <path d="M2 2l12 12M14 1L2 15" stroke="#444" strokeWidth="2.200" />
              </Icon>
            </button>
          </div>
          <label className="flex items-center gap-1.5">
            <span className="sr-only">过滤器</span>
            <Icon>
              <path d="M0 2h14L9 7v8H6V7z" fill="#ddd" stroke="#666" />
              <path d="M9 3v9l2-1.500 2 4.500 2-1-2-4.500h3z" fill="#fff" stroke="#333" />
            </Icon>
            <span className="flex h-[25px] w-[177px] items-center border border-[#b3b6b8] bg-[#f6f6f7]">
              <select className="h-full min-w-0 flex-1 appearance-none bg-transparent pl-1.5 focus:outline-hidden">
                <option>无</option>
              </select>
              <span className="flex h-full w-4 items-center justify-center border-l border-[#b3b6b8]">
                <Caret />
              </span>
            </span>
          </label>
        </div>

        <h3 className="mt-[13px] leading-[20px] font-bold">草绘状况</h3>
        <div className="flex h-[26px] items-center justify-between">
          <span>完全放置</span>
          <button
            type="button"
            disabled
            aria-label="求解"
            className="flex size-6 items-center justify-center border border-[#d3d5d6] bg-[#fafafa]"
          >
            <Icon>
              <path d="M1 3.500h6M1 7.500h4M1 11.500h5M1 15.500h14" stroke="#999" strokeDasharray="1 3" />
              <path d="M3 8q2-5 6-4M7 1l3 3-3 3" stroke="#aaa" strokeWidth="1.500" />
              <path d="M14 2q-5 2-4 6t5 2M12 0l3 2-3 3" stroke="#aaa" strokeWidth="1.500" />
            </Icon>
          </button>
        </div>
      </div>

      <div className="mt-auto flex h-[45px] shrink-0 items-start justify-end border-t border-[#c9cbcd] px-2.5 pt-2.5">
        <button type="button" className="h-[25px] w-11 border border-[#b3b6b8] bg-[#fafafa]">
          关闭
        </button>
      </div>

      <svg
        width="60"
        height="56"
        viewBox="0 0 60 56"
        className="pointer-events-none absolute left-[77px] top-[147px]"
        aria-hidden="true"
      >
        <path d="M1 .5l18 5-6 2L32 24l26 30L7 12l-2 5z" fill="#ff2412" />
      </svg>
    </div>
  );
};

const Watermark = () => (
  <div className="absolute right-[19px] bottom-[7px] flex flex-col">
    <div className="flex text-[41px] leading-[34px] font-light italic">
      <span className="text-[#ff6a33]">野火</span>
      <span className="text-black">论坛</span>
    </div>
    <span className="font-['Liberation_Sans',sans-serif] text-[18px] leading-[20px] text-[#8d979b] italic">
      www.proewildfire.cn
    </span>
    <svg width="18" height="42" viewBox="-1 0 18 42" className="absolute -top-6 left-16" aria-hidden="true">
      <path
        d="M3 0C12 8 17 16 16 24C15 32 10 37 6 42L-1 38C5 30 10 20 0 10C6 12 9 16 10 20C11 12 9 6 3 0Z"
        fill="#ff6a33"
      />
    </svg>
  </div>
);

export default function App() {
  return (
    <div className="relative flex h-screen flex-col overflow-hidden bg-[#02515f] font-['Noto_Sans','Noto_Sans_CJK_SC',sans-serif] text-[12px] leading-[18px] text-[#454545]">
      <Ribbon />
      <div className="flex min-h-0 flex-1">
        <Sidebar />
        <main className="relative min-w-0 flex-1 overflow-hidden">
          <Sketch />
          <ViewToolbar />
          <Dialog />
          <Watermark />
        </main>
      </div>
      <svg
        width="66"
        height="50"
        viewBox="0 0 66 50"
        className="pointer-events-none absolute left-[5px] top-[18px]"
        aria-hidden="true"
      >
        <ellipse cx="33" cy="25" rx="31" ry="23" fill="none" stroke="#ff1a0a" strokeWidth="2.500" />
      </svg>
    </div>
  );
}
